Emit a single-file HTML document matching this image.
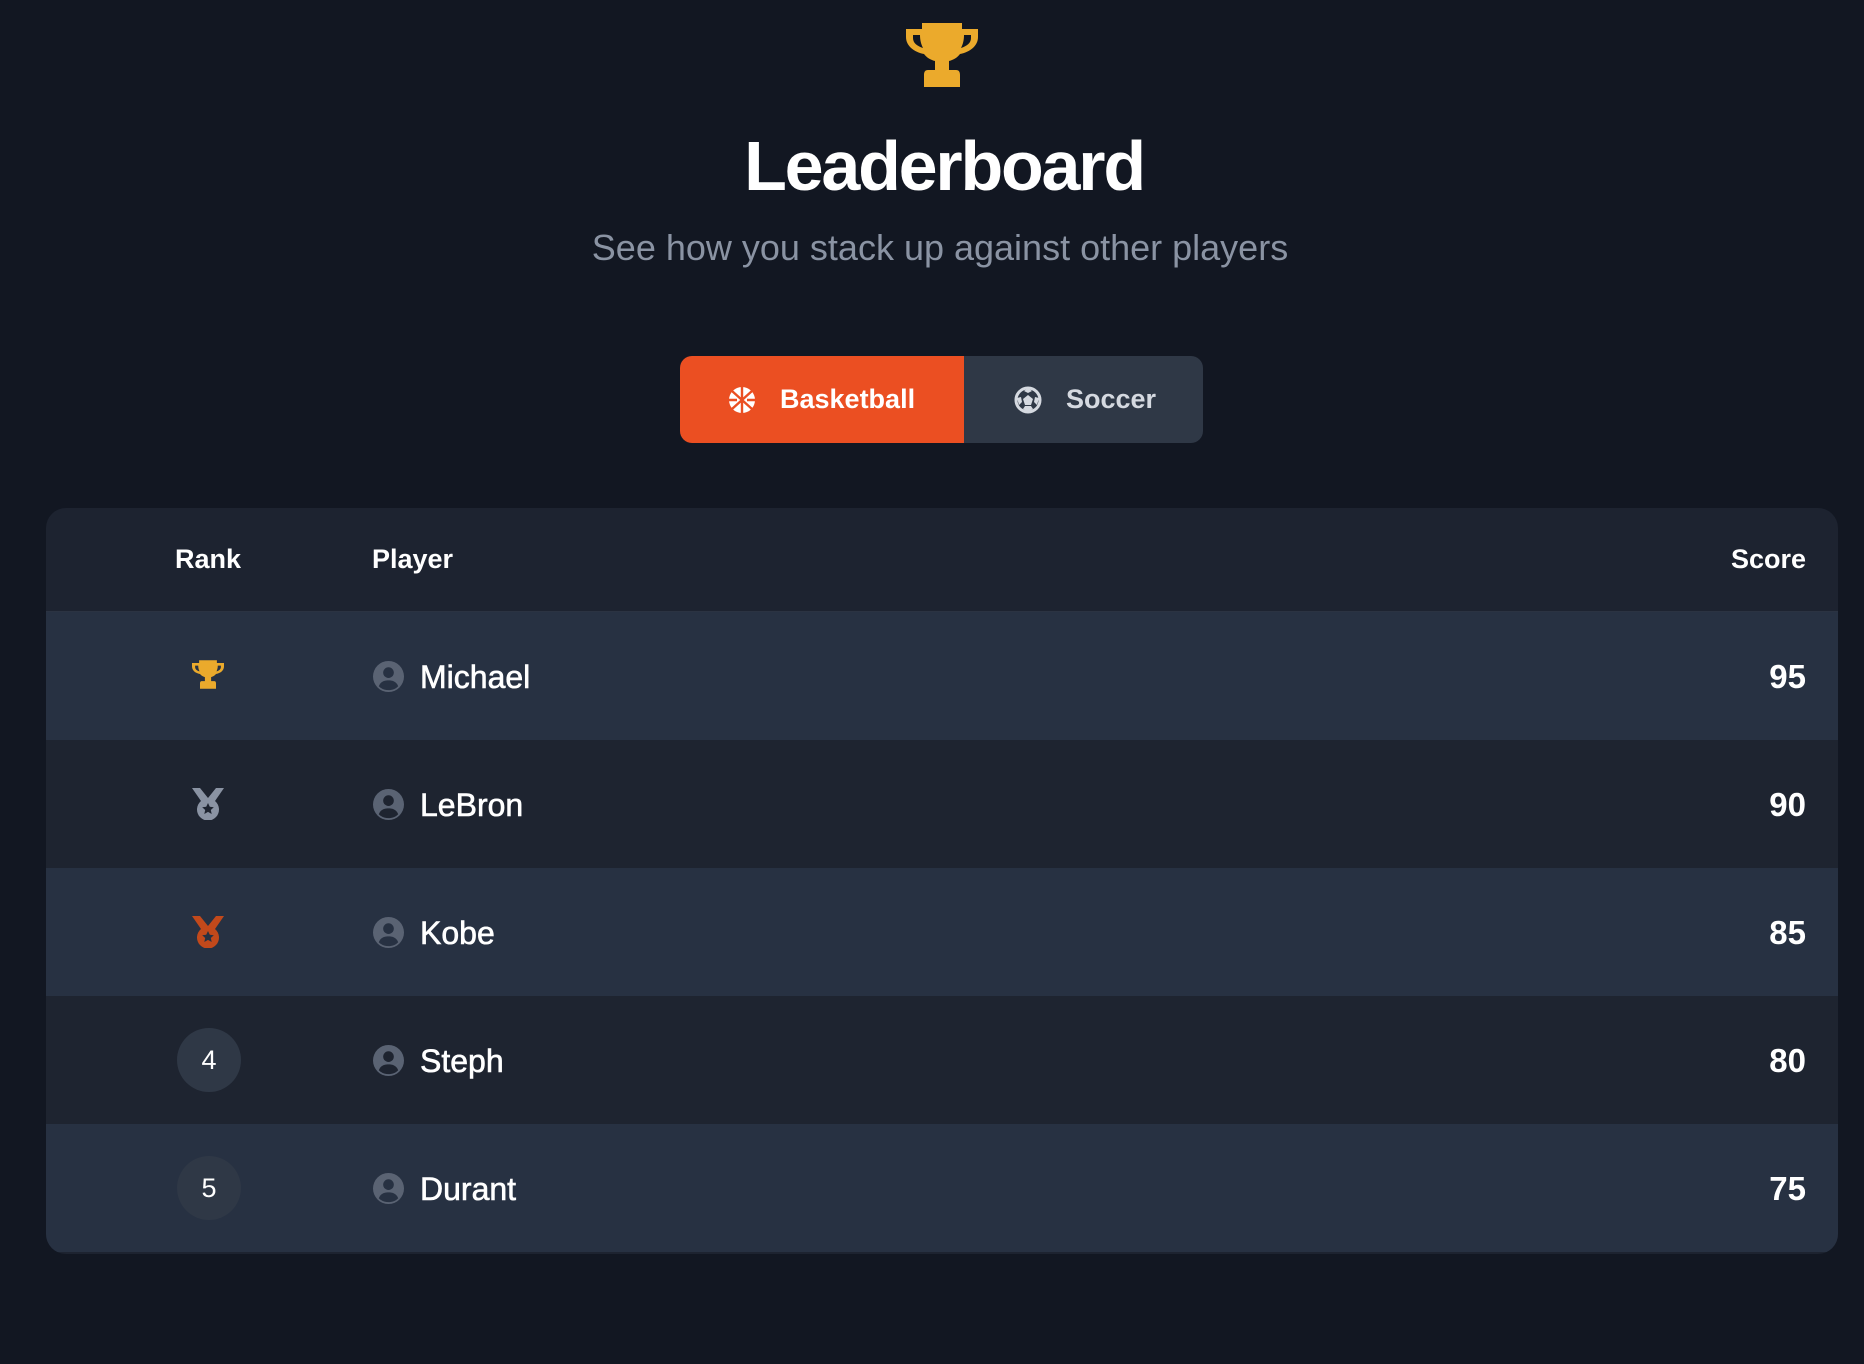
<!DOCTYPE html>
<html><head><meta charset="utf-8"><style>
*{margin:0;padding:0;box-sizing:border-box}
body{width:1864px;height:1364px;background:#121722;font-family:"Liberation Sans",sans-serif;color:#fff;position:relative;overflow:hidden}
.trophy{position:absolute;left:906px;top:23px}
h1{position:absolute;left:12px;width:1864px;top:126px;text-align:center;font-size:70px;font-weight:700;letter-spacing:-2.2px;line-height:80px}
.sub{position:absolute;left:8px;width:1864px;top:224px;text-align:center;font-size:36px;color:#8a93a3;line-height:48px}
.tabs{position:absolute;left:680px;top:356px;height:87px;display:flex;border-radius:12px;overflow:hidden}
.tab{display:flex;align-items:center;font-size:27px;font-weight:700;height:87px}
.t1{width:284px;background:#eb4f22;padding-left:48px}
.t2{width:239px;background:#2f3846;padding-left:50px;color:#d5d9e0}
.tab svg{margin-right:24px}
.table{position:absolute;left:46px;top:508px;width:1792px;height:746px;border-radius:20px;overflow:hidden;background:#1d2330}
.hdr{height:104px;position:relative;border-bottom:1px solid #2b3342;font-size:27px;font-weight:700}
.hdr span{position:absolute;top:36px}
.row{height:128px;position:relative}
.odd{background:#273142}.even{background:#1e2430}
.rk{position:absolute;left:131px;top:32px;width:64px;height:64px;border-radius:50%;background:#2f3846;text-align:center;line-height:64px;font-size:27px}
.ico{position:absolute;left:146px;top:48px}
.pi{position:absolute;left:327px;top:49px}
.nm{position:absolute;left:374px;top:45px;font-size:32px;line-height:40px;-webkit-text-stroke:0.6px #fff}
.sc{position:absolute;right:32px;top:45px;font-size:33px;font-weight:700;line-height:40px}
</style></head><body>
<svg class="trophy" width="72" height="64" viewBox="0 0 72 64"><path fill="#ebaa2c" d="M16 0h40v6h16v8c0 9-8 15-18 17-3 4-7 6-11 7v9h7c3 0 4 2 4 5v12H18V52c0-3 1-5 4-5h7v-9c-4-1-8-3-11-7C8 29 0 23 0 14V6h16zM7 12v3c0 5 4 8 10 10-2-4-3-8-3-13zm58 0h-7c0 5-1 9-3 13 6-2 10-5 10-10z"/></svg>
<h1>Leaderboard</h1>
<div class="sub">See how you stack up against other players</div>
<div class="tabs">
<div class="tab t1"><svg width="28" height="28" viewBox="0 0 28 28"><circle cx="14" cy="14" r="13" fill="#fff"/><g stroke="#eb4f22" stroke-width="2.4" fill="none"><path d="M4 5l20 18M24 5L4 23M14 1v26M1 14h8M19 14h8"/></g></svg>Basketball</div>
<div class="tab t2"><svg width="28" height="28" viewBox="0 0 28 28"><circle cx="14" cy="14" r="12" fill="none" stroke="#d5d9e0" stroke-width="3"/><path fill="#d5d9e0" d="M14 9l5 4-2 6h-6l-2-6z M14 2l4 3-4 2-4-2z M3 12l4-1 1 5-3 3z M25 12l-4-1-1 5 3 3z M9 23l2-3h6l2 3-5 3z"/></svg>Soccer</div>
</div>
<div class="table">
<div class="hdr"><span style="left:129px">Rank</span><span style="left:326px">Player</span><span style="right:32px">Score</span></div>
<div class="row odd"><svg class="ico" width="32" height="29" viewBox="0 0 72 64"><path fill="#ebaa2c" d="M16 0h40v6h16v8c0 9-8 15-18 17-3 4-7 6-11 7v9h7c3 0 4 2 4 5v12H18V52c0-3 1-5 4-5h7v-9c-4-1-8-3-11-7C8 29 0 23 0 14V6h16zM7 12v3c0 5 4 8 10 10-2-4-3-8-3-13zm58 0h-7c0 5-1 9-3 13 6-2 10-5 10-10z"/></svg><svg class="pi" width="31" height="31" viewBox="0 0 32 32"><circle cx="16" cy="16" r="16" fill="#5a6373"/><circle cx="16" cy="12" r="5.5" fill="#273142"/><path d="M6 26c2-5 6-6 10-6s8 1 10 6c-3 3-6 4-10 4s-7-1-10-4z" fill="#273142"/></svg><span class="nm">Michael</span><span class="sc">95</span></div>
<div class="row even"><svg class="ico" width="32" height="32" viewBox="0 0 32 32"><path fill="#8a93a3" d="M0 0h8l8 10 8-10h8l-9 13A11 11 0 1 1 9 13z"/><circle cx="16" cy="21" r="10" fill="#8a93a3"/><path fill="#1e2430" d="M16 15l1.8 3.8 4 .4-3 2.8.9 4-3.7-2.1-3.7 2.1.9-4-3-2.8 4-.4z"/></svg><svg class="pi" width="31" height="31" viewBox="0 0 32 32"><circle cx="16" cy="16" r="16" fill="#5a6373"/><circle cx="16" cy="12" r="5.5" fill="#1e2430"/><path d="M6 26c2-5 6-6 10-6s8 1 10 6c-3 3-6 4-10 4s-7-1-10-4z" fill="#1e2430"/></svg><span class="nm">LeBron</span><span class="sc">90</span></div>
<div class="row odd"><svg class="ico" width="32" height="32" viewBox="0 0 32 32"><path fill="#c2491b" d="M0 0h8l8 10 8-10h8l-9 13A11 11 0 1 1 9 13z"/><circle cx="16" cy="21" r="10" fill="#c2491b"/><path fill="#273142" d="M16 15l1.8 3.8 4 .4-3 2.8.9 4-3.7-2.1-3.7 2.1.9-4-3-2.8 4-.4z"/></svg><svg class="pi" width="31" height="31" viewBox="0 0 32 32"><circle cx="16" cy="16" r="16" fill="#5a6373"/><circle cx="16" cy="12" r="5.5" fill="#273142"/><path d="M6 26c2-5 6-6 10-6s8 1 10 6c-3 3-6 4-10 4s-7-1-10-4z" fill="#273142"/></svg><span class="nm">Kobe</span><span class="sc">85</span></div>
<div class="row even"><div class="rk">4</div><svg class="pi" width="31" height="31" viewBox="0 0 32 32"><circle cx="16" cy="16" r="16" fill="#5a6373"/><circle cx="16" cy="12" r="5.5" fill="#1e2430"/><path d="M6 26c2-5 6-6 10-6s8 1 10 6c-3 3-6 4-10 4s-7-1-10-4z" fill="#1e2430"/></svg><span class="nm">Steph</span><span class="sc">80</span></div>
<div class="row odd"><div class="rk">5</div><svg class="pi" width="31" height="31" viewBox="0 0 32 32"><circle cx="16" cy="16" r="16" fill="#5a6373"/><circle cx="16" cy="12" r="5.5" fill="#273142"/><path d="M6 26c2-5 6-6 10-6s8 1 10 6c-3 3-6 4-10 4s-7-1-10-4z" fill="#273142"/></svg><span class="nm">Durant</span><span class="sc">75</span></div>
</div>
</body></html>
